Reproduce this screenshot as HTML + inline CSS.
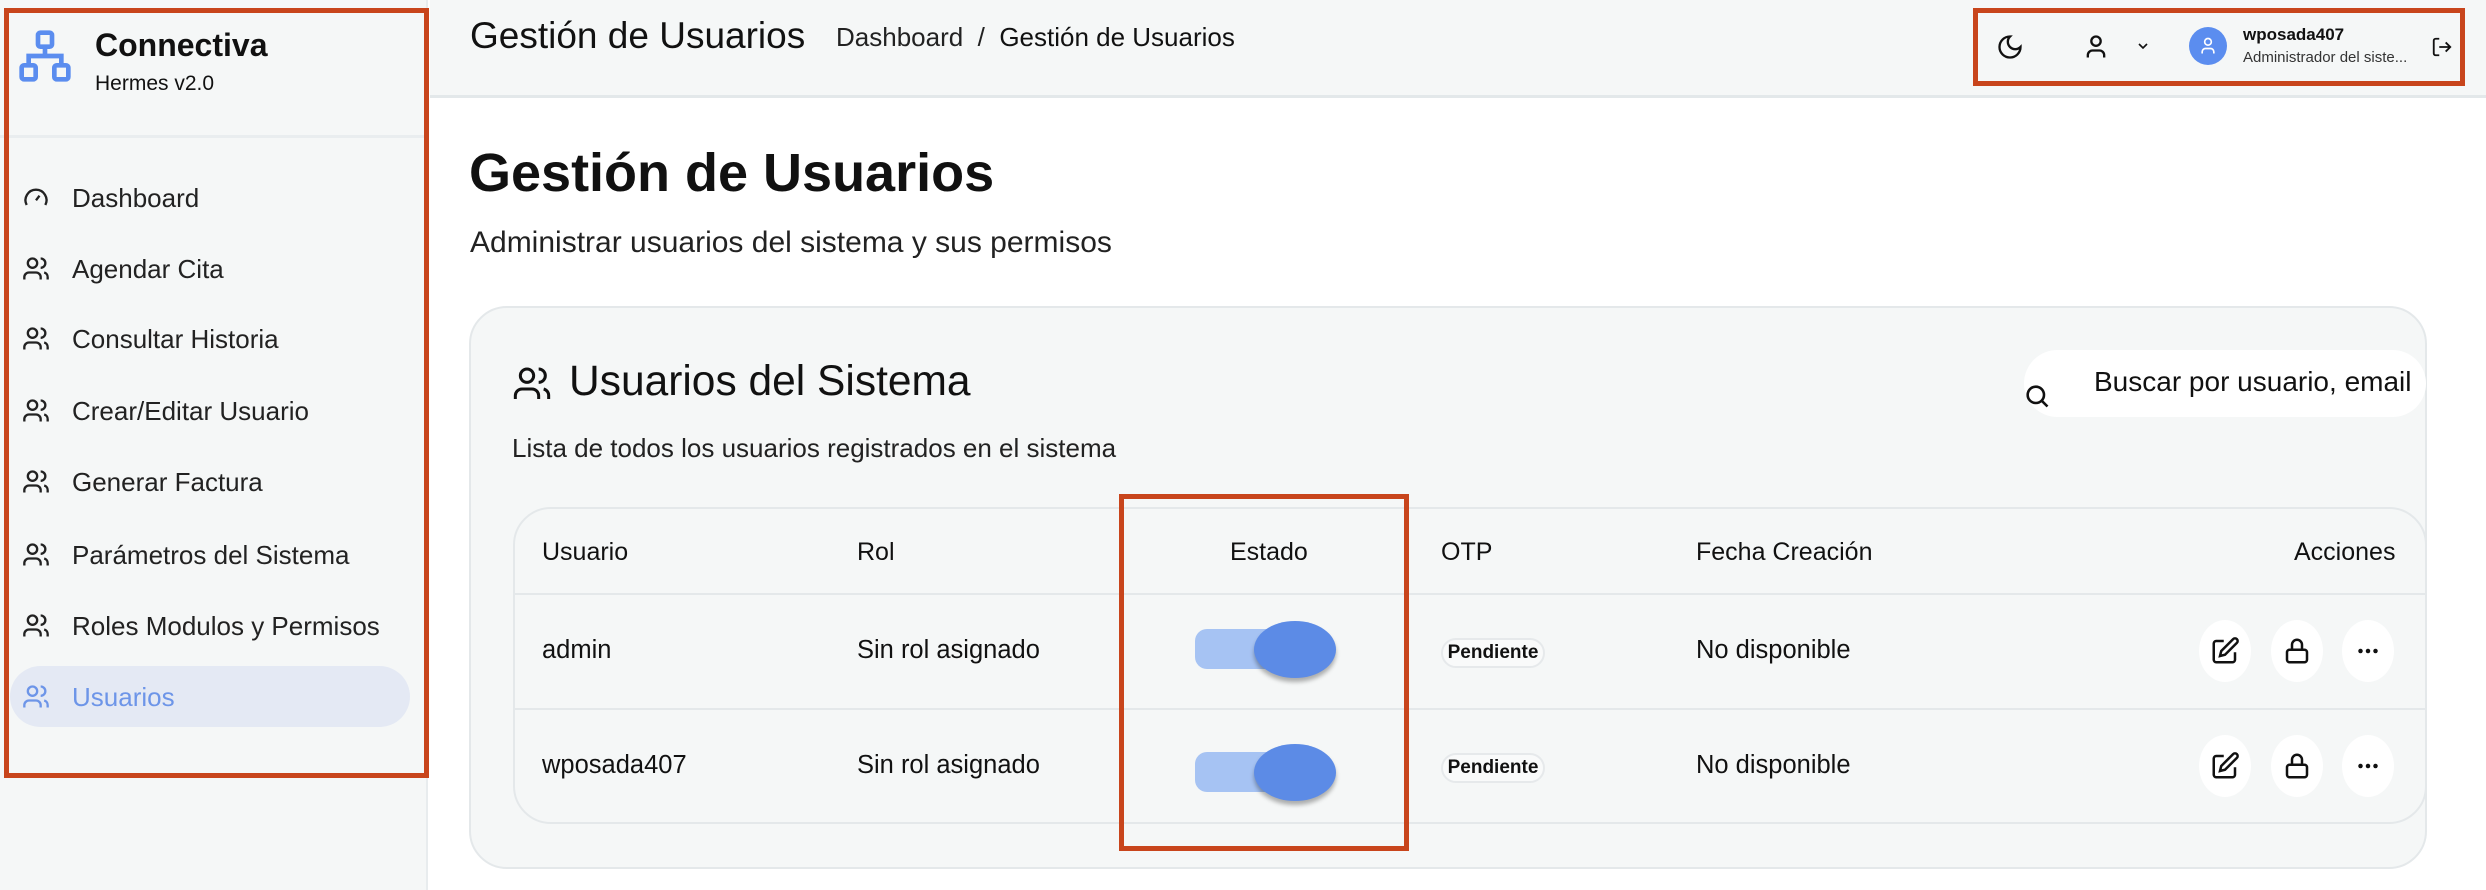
<!DOCTYPE html>
<html><head><meta charset="utf-8"><style>
*{box-sizing:border-box;margin:0;padding:0}
body{width:2486px;height:890px;overflow:hidden;background:#fff;font-family:"Liberation Sans",sans-serif;color:#111;position:relative}
.abs{position:absolute}
.side{left:0;top:0;width:428px;height:890px;background:#f5f7f7;border-right:2px solid #e8ecee}
.nav{position:absolute;left:22px;font-size:26px;color:#222;display:flex;align-items:center;gap:22px;height:40px}
.nav svg{width:28px;height:28px}
.hdr{left:430px;top:0;width:2056px;height:98px;background:#f5f7f7;border-bottom:3px solid #e3e8ea}
.red{position:absolute;border:5px solid #c8451c}
.th{position:absolute;top:538px;font-size:25px;color:#111}
.td{position:absolute;font-size:25.5px;color:#111}
.badge{position:absolute;width:104px;height:30px;border:2px solid #e6e9eb;border-radius:15px;background:#f9fafa;font-size:19px;font-weight:bold;text-align:center;line-height:26px}
.tog{position:absolute;left:1195px;width:136px;height:40px;border-radius:12px;background:#a6c3f3}
.knob{position:absolute;left:1254px;width:82px;height:57px;border-radius:50%;background:#5c8be6;box-shadow:0 4px 4px rgba(0,0,0,.3)}
.ab{position:absolute;width:52px;height:62px;border-radius:50%;background:#fff;display:flex;align-items:center;justify-content:center}
.ab svg{width:30px;height:30px}
</style></head><body>
<div class="abs side"></div>
<svg class="abs" style="left:16px;top:28px" width="58" height="56" viewBox="0 0 24 24" fill="none" stroke="#5b8def" stroke-width="2"><rect x="9" y="2" width="6" height="6" rx="1"/><rect x="2" y="16" width="6" height="6" rx="1"/><rect x="16" y="16" width="6" height="6" rx="1"/><path d="M12 8v4M5 16v-4h14v4"/></svg>
<div class="abs" style="left:95px;top:27px;font-size:32px;font-weight:bold">Connectiva</div>
<div class="abs" style="left:95px;top:72px;font-size:21px">Hermes v2.0</div>
<div class="abs" style="left:0;top:135px;width:428px;height:3px;background:#e9edef"></div>
<div class="abs" style="left:10px;top:666px;width:400px;height:61px;border-radius:31px;background:#e4e9f4"></div>
<div class="nav" style="top:178px"><svg viewBox="0 0 24 24" fill="none" stroke="#222" stroke-width="2"><path d="M12 14l3-4M4 18a9 9 0 1 1 16 0"/></svg>Dashboard</div>
<div class="nav" style="top:249px"><svg viewBox="0 0 24 24" fill="none" stroke="#222" stroke-width="2"><circle cx="9" cy="7" r="4"/><path d="M2 21v-2a4 4 0 0 1 4-4h6a4 4 0 0 1 4 4v2M16 3a4 4 0 0 1 0 8M22 21v-2a4 4 0 0 0-3-4"/></svg>Agendar Cita</div>
<div class="nav" style="top:319px"><svg viewBox="0 0 24 24" fill="none" stroke="#222" stroke-width="2"><circle cx="9" cy="7" r="4"/><path d="M2 21v-2a4 4 0 0 1 4-4h6a4 4 0 0 1 4 4v2M16 3a4 4 0 0 1 0 8M22 21v-2a4 4 0 0 0-3-4"/></svg>Consultar Historia</div>
<div class="nav" style="top:391px"><svg viewBox="0 0 24 24" fill="none" stroke="#222" stroke-width="2"><circle cx="9" cy="7" r="4"/><path d="M2 21v-2a4 4 0 0 1 4-4h6a4 4 0 0 1 4 4v2M16 3a4 4 0 0 1 0 8M22 21v-2a4 4 0 0 0-3-4"/></svg>Crear/Editar Usuario</div>
<div class="nav" style="top:462px"><svg viewBox="0 0 24 24" fill="none" stroke="#222" stroke-width="2"><circle cx="9" cy="7" r="4"/><path d="M2 21v-2a4 4 0 0 1 4-4h6a4 4 0 0 1 4 4v2M16 3a4 4 0 0 1 0 8M22 21v-2a4 4 0 0 0-3-4"/></svg>Generar Factura</div>
<div class="nav" style="top:535px"><svg viewBox="0 0 24 24" fill="none" stroke="#222" stroke-width="2"><circle cx="9" cy="7" r="4"/><path d="M2 21v-2a4 4 0 0 1 4-4h6a4 4 0 0 1 4 4v2M16 3a4 4 0 0 1 0 8M22 21v-2a4 4 0 0 0-3-4"/></svg>Parámetros del Sistema</div>
<div class="nav" style="top:606px"><svg viewBox="0 0 24 24" fill="none" stroke="#222" stroke-width="2"><circle cx="9" cy="7" r="4"/><path d="M2 21v-2a4 4 0 0 1 4-4h6a4 4 0 0 1 4 4v2M16 3a4 4 0 0 1 0 8M22 21v-2a4 4 0 0 0-3-4"/></svg>Roles Modulos y Permisos</div>
<div class="nav" style="top:677px;color:#6d95e8"><svg viewBox="0 0 24 24" fill="none" stroke="#6d95e8" stroke-width="2"><circle cx="9" cy="7" r="4"/><path d="M2 21v-2a4 4 0 0 1 4-4h6a4 4 0 0 1 4 4v2M16 3a4 4 0 0 1 0 8M22 21v-2a4 4 0 0 0-3-4"/></svg>Usuarios</div>
<div class="red" style="left:4px;top:8px;width:425px;height:770px"></div>

<div class="abs hdr"></div>
<div class="abs" style="left:470px;top:15px;font-size:37px;color:#111">Gestión de Usuarios</div>
<div class="abs" style="left:836px;top:22px;font-size:26px;color:#222">Dashboard &nbsp;/&nbsp; <span style="color:#111">Gestión de Usuarios</span></div>
<svg class="abs" style="left:1996px;top:33px" width="28" height="28" viewBox="0 0 24 24" fill="none" stroke="#111" stroke-width="2"><path d="M12 3a6 6 0 0 0 9 9 9 9 0 1 1-9-9z"/></svg>
<svg class="abs" style="left:2082px;top:33px" width="28" height="28" viewBox="0 0 24 24" fill="none" stroke="#111" stroke-width="2"><circle cx="12" cy="7" r="4"/><path d="M5 21v-2a4 4 0 0 1 4-4h6a4 4 0 0 1 4 4v2"/></svg>
<svg class="abs" style="left:2135px;top:38px" width="16" height="16" viewBox="0 0 24 24" fill="none" stroke="#111" stroke-width="2.5"><path d="M6 9l6 6 6-6"/></svg>
<div class="abs" style="left:2189px;top:27px;width:38px;height:38px;border-radius:50%;background:#5b8def"></div>
<svg class="abs" style="left:2198px;top:36px" width="20" height="20" viewBox="0 0 24 24" fill="none" stroke="#fff" stroke-width="2"><circle cx="12" cy="7" r="4"/><path d="M5 21v-2a4 4 0 0 1 4-4h6a4 4 0 0 1 4 4v2"/></svg>
<div class="abs" style="left:2243px;top:25px;font-size:17px;font-weight:bold">wposada407</div>
<div class="abs" style="left:2243px;top:49px;font-size:15px;color:#333">Administrador del siste...</div>
<svg class="abs" style="left:2431px;top:36px" width="22" height="22" viewBox="0 0 24 24" fill="none" stroke="#111" stroke-width="2"><path d="M9 21H5a2 2 0 0 1-2-2V5a2 2 0 0 1 2-2h4M16 17l5-5-5-5M21 12H9"/></svg>
<div class="red" style="left:1973px;top:8px;width:492px;height:78px"></div>

<div class="abs" style="left:469px;top:142px;font-size:54px;font-weight:bold">Gestión de Usuarios</div>
<div class="abs" style="left:470px;top:226px;font-size:30px;color:#222">Administrar usuarios del sistema y sus permisos</div>

<div class="abs" style="left:469px;top:306px;width:1958px;height:563px;background:#f5f7f7;border:2px solid #e4e8ea;border-radius:38px"></div>
<svg class="abs" style="left:512px;top:364px" width="40" height="40" viewBox="0 0 24 24" fill="none" stroke="#111" stroke-width="1.8"><circle cx="9" cy="7" r="4"/><path d="M2 21v-2a4 4 0 0 1 4-4h6a4 4 0 0 1 4 4v2M16 3a4 4 0 0 1 0 8M22 21v-2a4 4 0 0 0-3-4"/></svg>
<div class="abs" style="left:569px;top:358px;font-size:42.5px">Usuarios del Sistema</div>
<div class="abs" style="left:512px;top:433px;font-size:26px;color:#222">Lista de todos los usuarios registrados en el sistema</div>
<div class="abs" style="left:2024px;top:350px;width:402px;height:67px;border-radius:34px;background:#fff;overflow:hidden"><div style="position:absolute;left:70px;top:16px;white-space:nowrap;font-size:28px;color:#111">Buscar por usuario, email</div></div>
<svg class="abs" style="left:2023px;top:382px" width="28" height="28" viewBox="0 0 24 24" fill="none" stroke="#111" stroke-width="2.2"><circle cx="11" cy="11" r="7"/><path d="M21 21l-5-5"/></svg>

<div class="abs" style="left:513px;top:507px;width:1914px;height:317px;border:2px solid #e4e8ea;border-radius:38px"></div>
<div class="abs" style="left:513px;top:593px;width:1914px;height:2px;background:#e4e8ea"></div>
<div class="abs" style="left:513px;top:708px;width:1914px;height:2px;background:#e4e8ea"></div>
<div class="th" style="left:542px">Usuario</div>
<div class="th" style="left:857px">Rol</div>
<div class="th" style="left:1230px">Estado</div>
<div class="th" style="left:1441px">OTP</div>
<div class="th" style="left:1696px">Fecha Creación</div>
<div class="th" style="left:2294px">Acciones</div>

<div class="td" style="left:542px;top:636px">admin</div>
<div class="td" style="left:857px;top:636px">Sin rol asignado</div>
<div class="tog" style="top:629px"></div><div class="knob" style="top:621px"></div>
<div class="badge" style="left:1441px;top:638px">Pendiente</div>
<div class="td" style="left:1696px;top:636px">No disponible</div>

<div class="td" style="left:542px;top:751px">wposada407</div>
<div class="td" style="left:857px;top:751px">Sin rol asignado</div>
<div class="tog" style="top:752px"></div><div class="knob" style="top:744px"></div>
<div class="badge" style="left:1441px;top:753px">Pendiente</div>
<div class="td" style="left:1696px;top:751px">No disponible</div>

<div class="ab" style="left:2199px;top:620px"><svg viewBox="0 0 24 24" fill="none" stroke="#111" stroke-width="2"><path d="M11 4H5a2 2 0 0 0-2 2v13a2 2 0 0 0 2 2h13a2 2 0 0 0 2-2v-6"/><path d="M18.5 2.5a2.1 2.1 0 0 1 3 3L12 15l-4 1 1-4z"/></svg></div>
<div class="ab" style="left:2271px;top:620px"><svg viewBox="0 0 24 24" fill="none" stroke="#111" stroke-width="2"><rect x="4" y="11" width="16" height="10" rx="2"/><path d="M8 11V7a4 4 0 0 1 8 0v4"/></svg></div>
<div class="ab" style="left:2342px;top:620px"><svg viewBox="0 0 24 24" fill="#111"><circle cx="6" cy="12" r="1.8"/><circle cx="12" cy="12" r="1.8"/><circle cx="18" cy="12" r="1.8"/></svg></div>
<div class="ab" style="left:2199px;top:735px"><svg viewBox="0 0 24 24" fill="none" stroke="#111" stroke-width="2"><path d="M11 4H5a2 2 0 0 0-2 2v13a2 2 0 0 0 2 2h13a2 2 0 0 0 2-2v-6"/><path d="M18.5 2.5a2.1 2.1 0 0 1 3 3L12 15l-4 1 1-4z"/></svg></div>
<div class="ab" style="left:2271px;top:735px"><svg viewBox="0 0 24 24" fill="none" stroke="#111" stroke-width="2"><rect x="4" y="11" width="16" height="10" rx="2"/><path d="M8 11V7a4 4 0 0 1 8 0v4"/></svg></div>
<div class="ab" style="left:2342px;top:735px"><svg viewBox="0 0 24 24" fill="#111"><circle cx="6" cy="12" r="1.8"/><circle cx="12" cy="12" r="1.8"/><circle cx="18" cy="12" r="1.8"/></svg></div>

<div class="red" style="left:1119px;top:494px;width:290px;height:357px"></div>
</body></html>
